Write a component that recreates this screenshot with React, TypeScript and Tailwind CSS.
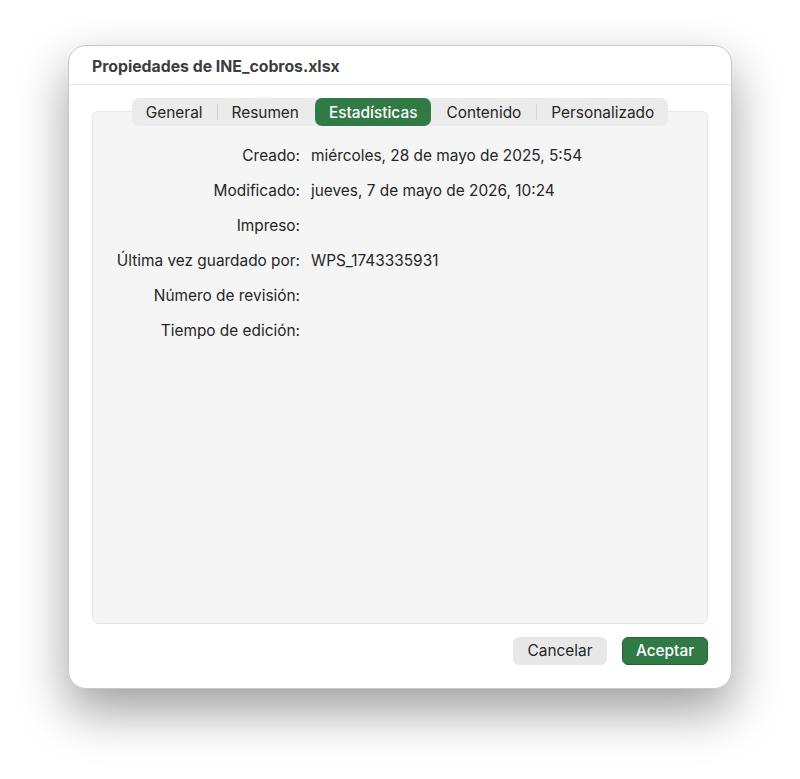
import React from "react";

const rows: [string, string][] = [
  ["Creado:", "miércoles, 28 de mayo de 2025, 5:54"],
  ["Modificado:", "jueves, 7 de mayo de 2026, 10:24"],
  ["Impreso:", ""],
  ["Última vez guardado por:", "WPS_1743335931"],
  ["Número de revisión:", ""],
  ["Tiempo de edición:", ""],
];

export default function App() {
  return (
    <div
      className="w-[800px] h-[779px] bg-white pt-[45px] pl-[68px]"
      style={{ fontFamily: "Inter, 'Noto Sans', sans-serif" }}
    >
      <div className="w-[664px] h-[644px] bg-white rounded-[18px] border border-[#c8c8c8] shadow-[0_22px_50px_rgba(0,0,0,0.38)] flex flex-col overflow-hidden">
        <div className="h-[39px] shrink-0 flex items-center pt-[3px] px-[23px] border-b border-[#e6e6e6]">
          <span className="text-[15.8px] font-bold text-[#3d3d3d]">
            Propiedades de INE_cobros.xlsx
          </span>
        </div>
        <div className="flex-1 flex flex-col px-[23px] pt-[13px] pb-[23px]">
          <div className="flex justify-center relative z-10">
            <div className="h-[28px] bg-[#ebebeb] rounded-[7px] flex items-center text-[15.4px] text-[#262626]">
              <div className="px-[14px] pt-[1px]">General</div>
              <div className="w-px h-[16px] bg-[#d4d4d4]" />
              <div className="px-[14px] pt-[1px]">Resumen</div>
              <div className="ml-[2px] h-[28px] px-[14px] pt-[1px] bg-[#317a46] rounded-[7px] text-white font-medium flex items-center">
                Estadísticas
              </div>
              <div className="px-[15px] pt-[1px]">Contenido</div>
              <div className="w-px h-[16px] bg-[#d4d4d4]" />
              <div className="px-[14px] pt-[1px]">Personalizado</div>
            </div>
          </div>
          <div className="-mt-[15px] flex-1 bg-[#f5f5f5] border border-[#e6e6e6] rounded-[6px] pt-[26px]">
            {rows.map(([label, value]) => (
              <div key={label} className="h-[35px] flex items-center text-[15.4px] text-[#262626]">
                <div className="w-[207px] text-right">{label}</div>
                <div className="ml-[11px]">{value}</div>
              </div>
            ))}
          </div>
          <div className="mt-[13px] flex justify-end gap-[15px]">
            <button className="h-[28px] w-[94px] rounded-[6px] bg-[#e8e8e8] text-[15.4px] text-[#262626]">
              Cancelar
            </button>
            <button className="h-[28px] w-[86px] rounded-[6px] bg-[#317a46] border border-[#24623a] text-[15.4px] text-white font-medium">
              Aceptar
            </button>
          </div>
        </div>
      </div>
    </div>
  );
}
